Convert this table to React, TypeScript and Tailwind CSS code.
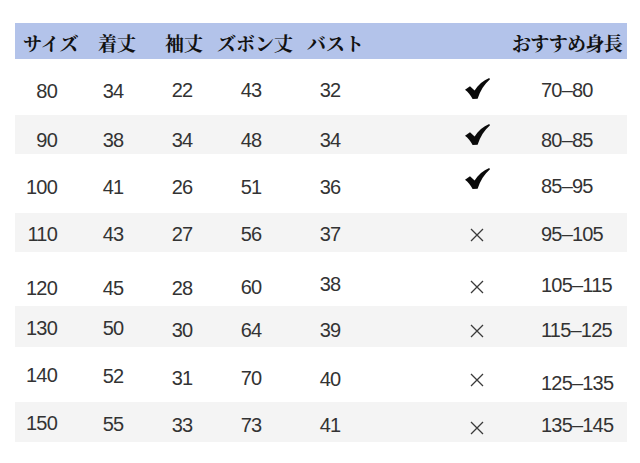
import React from "react";

type Cell = { t: string; y?: string };
type Row = {
  h: string;
  bg: string;
  c: Cell[];
  ok: boolean;
  oy: string;
  r: Cell;
};

const rows: Row[] = [
  {
    h: "h-[56px]",
    bg: "bg-white",
    c: [
      { t: "80", y: "translate-y-[4px]" },
      { t: "34", y: "translate-y-[4px]" },
      { t: "22", y: "translate-y-[3px]" },
      { t: "43", y: "translate-y-[3px]" },
      { t: "32", y: "translate-y-[3px]" },
    ],
    ok: true,
    oy: "translate-y-[1px]",
    r: { t: "70–80", y: "translate-y-[3px]" },
  },
  {
    h: "h-[39px]",
    bg: "bg-[#f4f4f4]",
    c: [
      { t: "90", y: "translate-y-[5px]" },
      { t: "38", y: "translate-y-[5px]" },
      { t: "34", y: "translate-y-[5px]" },
      { t: "48", y: "translate-y-[5px]" },
      { t: "34", y: "translate-y-[5px]" },
    ],
    ok: true,
    oy: "translate-y-[0px]",
    r: { t: "80–85", y: "translate-y-[5px]" },
  },
  {
    h: "h-[59px]",
    bg: "bg-white",
    c: [
      { t: "100", y: "translate-y-[3px]" },
      { t: "41", y: "translate-y-[3px]" },
      { t: "26", y: "translate-y-[3px]" },
      { t: "51", y: "translate-y-[3px]" },
      { t: "36", y: "translate-y-[3px]" },
    ],
    ok: true,
    oy: "-translate-y-[5px]",
    r: { t: "85–95", y: "translate-y-[2px]" },
  },
  {
    h: "h-[39px]",
    bg: "bg-[#f4f4f4]",
    c: [
      { t: "110", y: "translate-y-[1px]" },
      { t: "43", y: "translate-y-[1px]" },
      { t: "27", y: "translate-y-[1px]" },
      { t: "56", y: "translate-y-[1px]" },
      { t: "37", y: "translate-y-[1px]" },
    ],
    ok: false,
    oy: "translate-y-[2px]",
    r: { t: "95–105", y: "translate-y-[1px]" },
  },
  {
    h: "h-[54px]",
    bg: "bg-white",
    c: [
      { t: "120", y: "translate-y-[9px]" },
      { t: "45", y: "translate-y-[9px]" },
      { t: "28", y: "translate-y-[9px]" },
      { t: "60", y: "translate-y-[8px]" },
      { t: "38", y: "translate-y-[5px]" },
    ],
    ok: false,
    oy: "translate-y-[8px]",
    r: { t: "105–115", y: "translate-y-[6px]" },
  },
  {
    h: "h-[41px]",
    bg: "bg-[#f4f4f4]",
    c: [
      { t: "130", y: "translate-y-[1px]" },
      { t: "50", y: "translate-y-[1px]" },
      { t: "30", y: "translate-y-[3px]" },
      { t: "64", y: "translate-y-[3px]" },
      { t: "39", y: "translate-y-[3px]" },
    ],
    ok: false,
    oy: "translate-y-[4px]",
    r: { t: "115–125", y: "translate-y-[3px]" },
  },
  {
    h: "h-[55px]",
    bg: "bg-white",
    c: [
      { t: "140", y: "translate-y-[0px]" },
      { t: "52", y: "translate-y-[1px]" },
      { t: "31", y: "translate-y-[3px]" },
      { t: "70", y: "translate-y-[3px]" },
      { t: "40", y: "translate-y-[4px]" },
    ],
    ok: false,
    oy: "translate-y-[5px]",
    r: { t: "125–135", y: "translate-y-[8px]" },
  },
  {
    h: "h-[40px]",
    bg: "bg-[#f4f4f4]",
    c: [
      { t: "150", y: "translate-y-[1px]" },
      { t: "55", y: "translate-y-[2px]" },
      { t: "33", y: "translate-y-[3px]" },
      { t: "73", y: "translate-y-[3px]" },
      { t: "41", y: "translate-y-[3px]" },
    ],
    ok: false,
    oy: "translate-y-[6px]",
    r: { t: "135–145", y: "translate-y-[3px]" },
  },
];

function Check() {
  return (
    <svg width="25" height="21" viewBox="0 0 25 21" className="block">
      <path
        d="M0 11.8 L5 8.2 L9.6 12.6 C13.2 6.8 18.2 2.4 24.2 0 L25 1.3 C19.4 6.2 15.2 12.6 12.6 20.8 L7.6 21 C5.6 17.2 3 14 0 11.8 Z"
        fill="#0a0a0a"
      />
    </svg>
  );
}

function Cross() {
  return (
    <svg width="14" height="14" viewBox="0 0 14 14" className="block">
      <path d="M1 1 L13 13 M13 1 L1 13" stroke="#3a3a3a" strokeWidth="1.3" fill="none" />
    </svg>
  );
}

const colBoxes = [
  "w-[45px] text-right pr-[3px]",
  "w-[106px] text-center",
  "w-[32px] text-center",
  "w-[106px] text-center",
  "w-[52px] text-center",
];

export default function App() {
  const num =
    "font-['Liberation_Sans',Arial,sans-serif] text-[20px] leading-none tracking-[-0.8px] text-[#333333]";
  const jp =
    "font-['Noto_Serif_CJK_JP','Noto_Sans_CJK_JP',serif] text-[19px] leading-none font-bold text-[#111111] whitespace-nowrap";
  return (
    <div className="w-[640px] h-[463px] bg-white pt-[23px] pl-[15px] overflow-hidden">
      <div className="w-[612px] flex flex-col">
        <div className={`h-[36px] bg-[#b3c3ea] flex items-center ${jp}`}>
          <div className="w-[83px] pl-[8px] translate-y-[1px]">サイズ</div>
          <div className="w-[67px] translate-y-[1px]">着丈</div>
          <div className="w-[52px] translate-y-[1px]">袖丈</div>
          <div className="w-[90px] translate-y-[1px]">ズボン丈</div>
          <div className="w-[205px] translate-y-[1px]">バスト</div>
          <div className="flex-1 translate-y-[1px] tracking-[-0.7px]">おすすめ身長</div>
        </div>
        {rows.map((row, i) => (
          <div key={i} className={`${row.h} ${row.bg} flex items-center ${num}`}>
            {row.c.map((cell, j) => (
              <div key={j} className={`${colBoxes[j]} ${cell.y ?? ""}`}>
                {cell.t}
              </div>
            ))}
            <div className="w-[60px]" />
            <div className={`w-[122px] flex justify-center ${row.oy}`}>
              {row.ok ? <Check /> : <Cross />}
            </div>
            <div className={`flex-1 pl-[3px] whitespace-nowrap ${row.r.y ?? ""}`}>
              {row.r.t}
            </div>
          </div>
        ))}
      </div>
    </div>
  );
}
